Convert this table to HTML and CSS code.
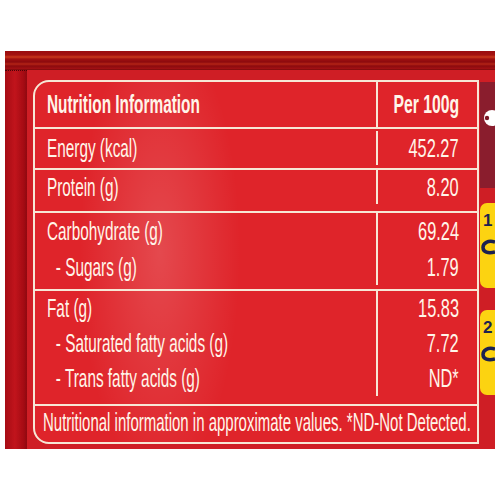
FILE: index.html
```html
<!DOCTYPE html>
<html lang="en">
<head>
    <meta charset="UTF-8">
    <meta name="viewport" content="width=device-width, initial-scale=1.0">
    <title>Nutrition Information</title>
    <link rel="stylesheet" href="styles.css">
</head>
<body>

<div class="pack">
    <div class="pack-top"></div>
    <div class="pack-body">
        <div class="pack-edge"></div>
        <div class="pack-face">
            <div class="nutrition">
                <div class="row head">
                    <div class="label"><span>Nutrition Information</span></div>
                    <div class="value"><span>Per 100g</span></div>
                </div>
                <div class="row energy">
                    <div class="label"><span>Energy (kcal)</span></div>
                    <div class="value"><span>452.27</span></div>
                </div>
                <div class="row protein">
                    <div class="label"><span>Protein (g)</span></div>
                    <div class="value"><span>8.20</span></div>
                </div>
                <div class="row carb">
                    <div class="label">
                        <span>Carbohydrate (g)</span>
                        <span class="sub">- Sugars (g)</span>
                    </div>
                    <div class="value">
                        <span>69.24</span>
                        <span>1.79</span>
                    </div>
                </div>
                <div class="row fat">
                    <div class="label">
                        <span>Fat (g)</span>
                        <span class="sub">- Saturated fatty acids (g)</span>
                        <span class="sub">- Trans fatty acids (g)</span>
                    </div>
                    <div class="value">
                        <span>15.83</span>
                        <span>7.72</span>
                        <span>ND*</span>
                    </div>
                </div>
                <div class="note">
                    <span>Nutritional information in approximate values. *ND-Not Detected.</span>
                </div>
            </div>

            <!-- edge of the next panel, cut off by the photo -->
            <div class="side">
                <div class="side-box">
                    <svg class="side-icon" width="15" height="20" viewBox="0 0 15 20">
                        <circle cx="12" cy="10" r="8" fill="#fff"/>
                        <circle cx="7" cy="10" r="2.2" fill="#7a1424"/>
                    </svg>
                </div>
                <div class="step">
                    <b>1</b>
                    <svg width="15" height="16" viewBox="0 0 15 16">
                        <path d="M15 3 C8 1 3 4 3 8.5 C3 13 8 15 15 13" fill="none" stroke="#1c2250" stroke-width="3.5"/>
                    </svg>
                </div>
                <div class="step">
                    <b>2</b>
                    <svg width="15" height="16" viewBox="0 0 15 16">
                        <path d="M15 3 C8 1 3 4 3 8.5 C3 13 8 15 15 13" fill="none" stroke="#1c2250" stroke-width="3.5"/>
                    </svg>
                </div>
            </div>
        </div>
    </div>
</div>

</body>
</html>
```

FILE: styles.css
```css
body {
    margin: 0;
    background-color: #fff;
    font-family: "Liberation Sans", Arial, sans-serif;
}
.pack {
    width: 490px;
    height: 398px;
    margin: 51px 5px 0;
    display: flex;
    flex-direction: column;
    background-color: #cf1e25;
}
.pack-top {
    height: 19px;
    background: linear-gradient(#9a0c10 0, #a41210 4px, #c9381c 6px, #a01010 8px, #8c0a0e 11px, #b42416 13px, #8c0a0e 15px, #a31114 18px, #6a0709 19px);
}
.pack-body {
    flex: 1;
    display: flex;
}
.pack-edge {
    width: 22px;
    background: linear-gradient(90deg, #a60c14, #c1141c 45%, #a50b13 85%, #8e0910);
    border-top: 1px dotted #4a0508;
}
.pack-face {
    flex: 1;
    display: flex;
    align-items: flex-start;
    padding: 10px 0 5px 6px;
}

/* the table printed on the pack */
.nutrition {
    width: 442px;
    border: 2px solid #f7e7d6;
    border-radius: 16px 0 0 16px;
    color: #fff5e9;
    background:
        radial-gradient(ellipse 80px 230px at 125px 170px, rgba(255, 255, 255, 0.17), rgba(255, 255, 255, 0)),
        #df242a;
}
.row {
    display: flex;
    border-top: 2px solid #f7e7d6;
    font-size: 26px;
}
.row.head {
    border-top: none;
    font-size: 25px;
    font-weight: bold;
    line-height: 45px;
}
.label {
    flex: 1;
    padding-left: 12px;
    border-right: 2px solid #f7e7d6;
}
.label span {
    display: block;
    white-space: nowrap;
    transform: scaleX(0.59);
    transform-origin: left;
}
.head .label span {
    transform: scaleX(0.615);
}
.label .sub {
    padding-left: 15px;
}
.value {
    width: 81px;
    padding-right: 18px;
    display: flex;
    flex-direction: column;
    align-items: flex-end;
}
.value span {
    white-space: nowrap;
    transform: scaleX(0.63);
    transform-origin: right;
}
.energy {
    line-height: 34px;
    padding: 2px 0 3px;
}
.protein {
    line-height: 34px;
    padding-bottom: 7px;
}
.carb {
    line-height: 36px;
    padding-bottom: 4px;
}
.fat {
    line-height: 35px;
    padding-bottom: 8px;
}
.note {
    border-top: 2px solid #f7e7d6;
    font-size: 26px;
    line-height: 32px;
    padding: 0 0 4px 8px;
}
.note span {
    display: block;
    white-space: nowrap;
    transform: scaleX(0.576);
    transform-origin: left;
}

/* next panel, only its edge shows */
.side {
    width: 15px;
    margin: 2px 0 0 1px;
    display: flex;
    flex-direction: column;
    gap: 15px;
}
.side-box {
    height: 106px;
    background-color: #8a1d2d;
    overflow: hidden;
}
.side-icon {
    display: block;
    margin-top: 26px;
}
.step {
    height: 85px;
    margin-bottom: 7px;
    background-color: #fcd311;
    border-radius: 7px 0 0 7px;
    overflow: hidden;
    font-size: 17px;
    color: #1c2250;
    padding: 9px 0 0 3px;
    box-sizing: border-box;
}
.step b {
    display: block;
    line-height: 18px;
}
.step svg {
    display: block;
    margin: 9px 0 0 -3px;
}
```
